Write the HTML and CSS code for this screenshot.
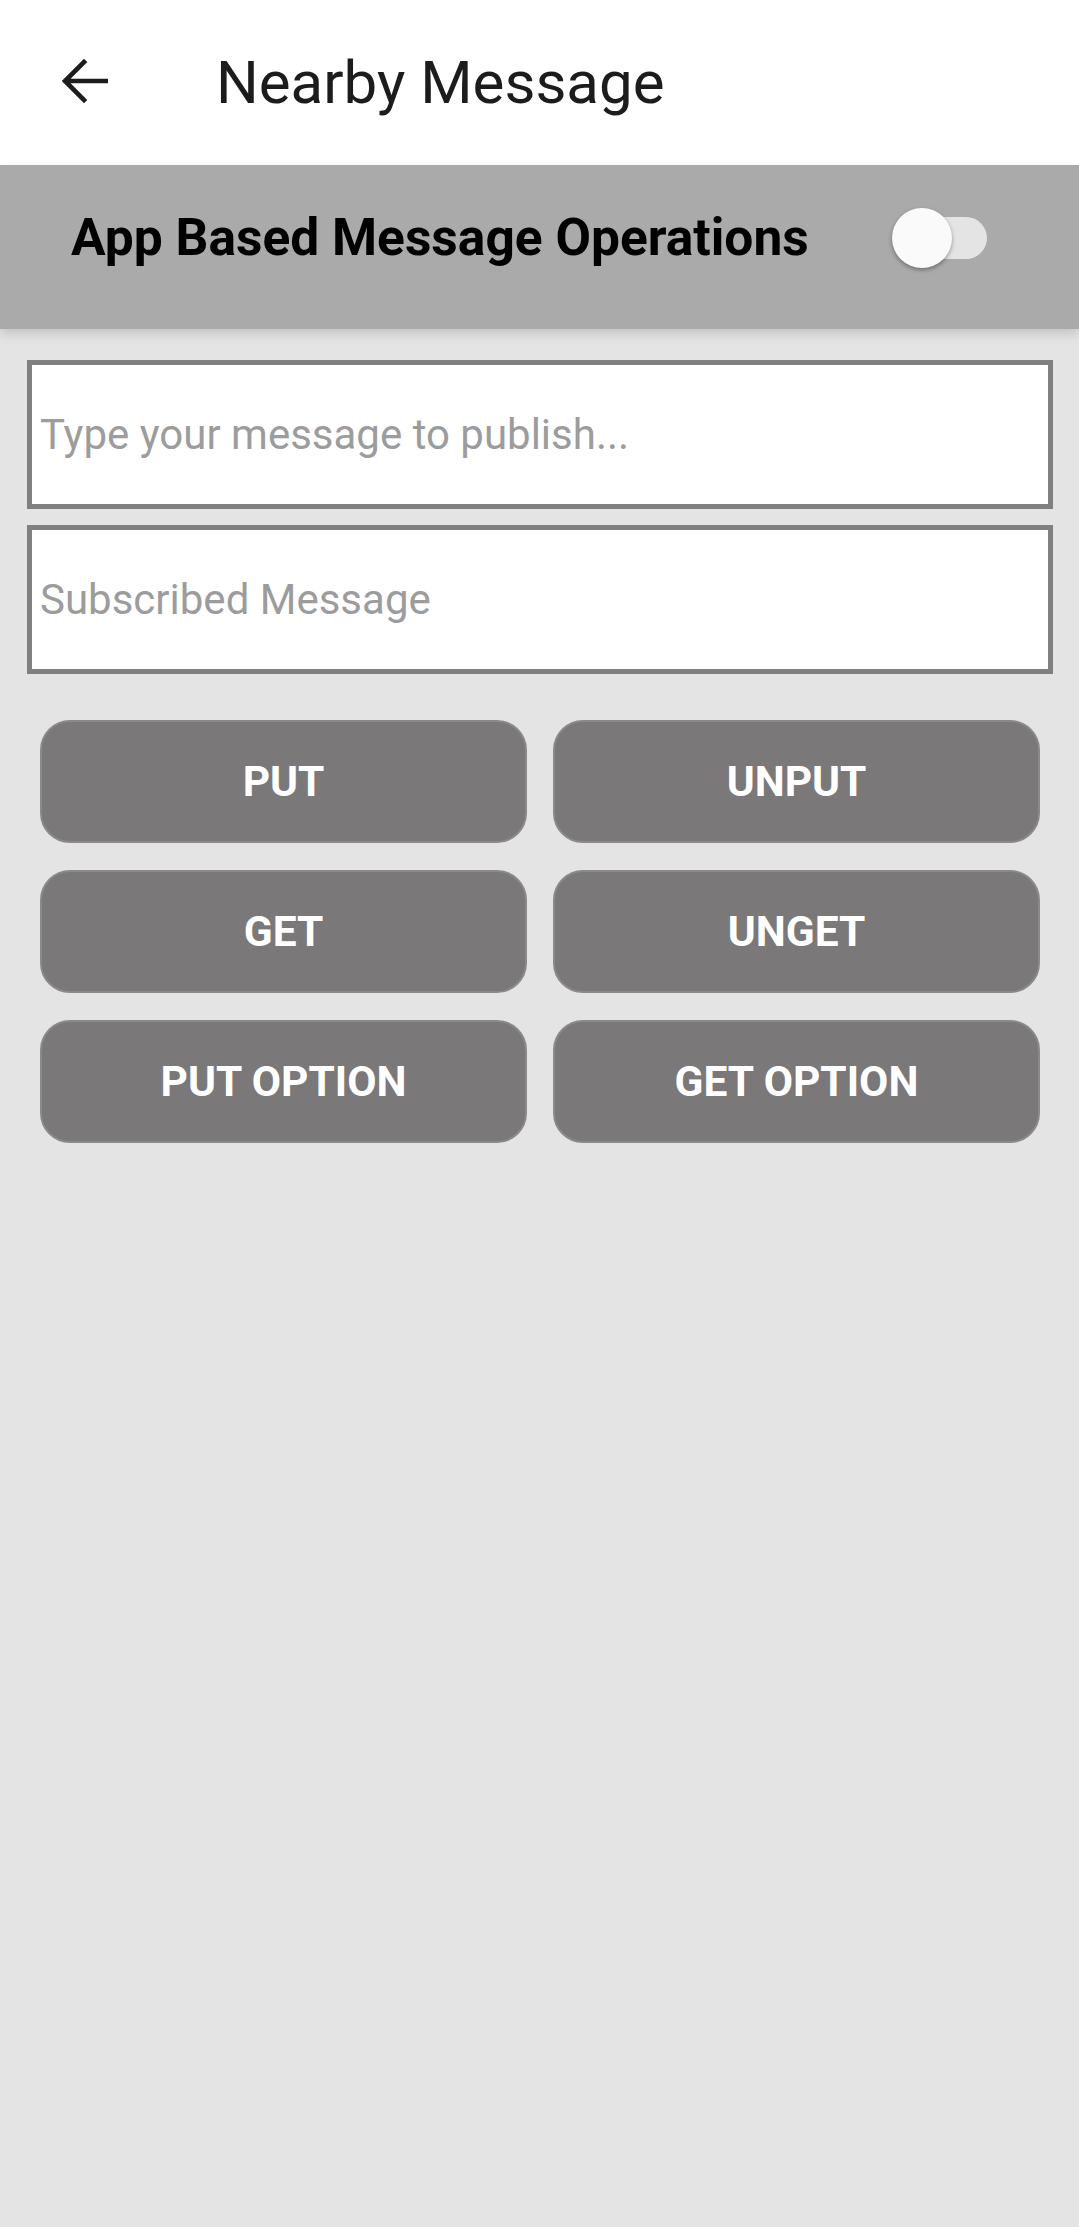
FILE: index.html
```html
<!DOCTYPE html>
<html>
<head>
<meta charset="utf-8">
<title>Nearby Message</title>
<link rel="stylesheet" href="styles.css">
</head>
<body>
<div class="app">
  <header class="topbar">
    <span class="back">
      <svg width="48" height="48" viewBox="0 0 48 48"><path d="M46 24H6M24 5L5 24l19 19" fill="none" stroke="#1c1c1c" stroke-width="4.6" stroke-linecap="square"/></svg>
    </span>
    <h1 class="title">Nearby Message</h1>
  </header>
  <div class="switchbar">
    <span class="switch-label">App Based Message Operations</span>
    <span class="toggle"><span class="track"></span><span class="thumb"></span></span>
  </div>
  <main class="content">
    <div class="field"><span class="placeholder">Type your message to publish...</span></div>
    <div class="field"><span class="placeholder">Subscribed Message</span></div>
    <div class="buttons">
      <button class="btn">PUT</button>
      <button class="btn">UNPUT</button>
      <button class="btn">GET</button>
      <button class="btn">UNGET</button>
      <button class="btn">PUT OPTION</button>
      <button class="btn">GET OPTION</button>
    </div>
  </main>
</div>
</body>
</html>
```
FILE: styles.css
```css
html, body {
  margin: 0;
  padding: 0;
  background: #e4e4e4;
  font-family: Roboto, "Noto Sans", "Liberation Sans", sans-serif;
}
.app {
  width: 1079px;
  min-height: 2227px;
  background: #e4e4e4;
}
.topbar {
  height: 165px;
  background: #ffffff;
  display: flex;
  align-items: center;
  padding-left: 60px;
  box-sizing: border-box;
}
.back {
  display: flex;
  width: 48px;
  height: 48px;
  margin-top: -4px;
}
.title {
  margin: 0 0 0 108px;
  font-weight: 400;
  font-size: 60px;
  color: #1c1c1c;
  line-height: 1;
}
.switchbar {
  height: 164px;
  background: #aaaaaa;
  display: flex;
  align-items: center;
  padding: 0 0 18px 71px;
  box-sizing: border-box;
  box-shadow: 0 5px 10px rgba(0, 0, 0, 0.14);
  position: relative;
}
.switch-label {
  font-weight: 700;
  font-size: 51.5px;
  color: #000000;
  line-height: 1;
}
.toggle {
  position: relative;
  width: 95px;
  height: 60px;
  margin-left: auto;
  margin-right: 92px;
}
.track {
  position: absolute;
  left: 5px;
  top: 9px;
  width: 90px;
  height: 42px;
  border-radius: 21px;
  background: #e4e4e4;
}
.thumb {
  position: absolute;
  left: 0;
  top: 0;
  width: 60px;
  height: 60px;
  border-radius: 50%;
  background: #fafafa;
  box-shadow: 0 2px 4px rgba(0, 0, 0, 0.35);
}
.content {
  padding: 31px 26px 0 27px;
}
.field {
  height: 149px;
  border: 5px solid #808080;
  background: #ffffff;
  box-sizing: border-box;
  display: flex;
  align-items: center;
  padding-left: 8px;
  margin-bottom: 16px;
}
.placeholder {
  font-size: 42px;
  color: #9c9c9c;
  line-height: 1;
}
.buttons {
  display: grid;
  grid-template-columns: 487px 487px;
  column-gap: 26px;
  row-gap: 27px;
  margin: 46px 0 0 13px;
}
.btn {
  height: 123px;
  border-radius: 30px;
  border: 2px solid #8a8a8a;
  background: #7a7879;
  color: #ffffff;
  font-family: Roboto, "Noto Sans", "Liberation Sans", sans-serif;
  font-weight: 700;
  font-size: 42.5px;
  padding: 0;
  margin: 0;
}
```
